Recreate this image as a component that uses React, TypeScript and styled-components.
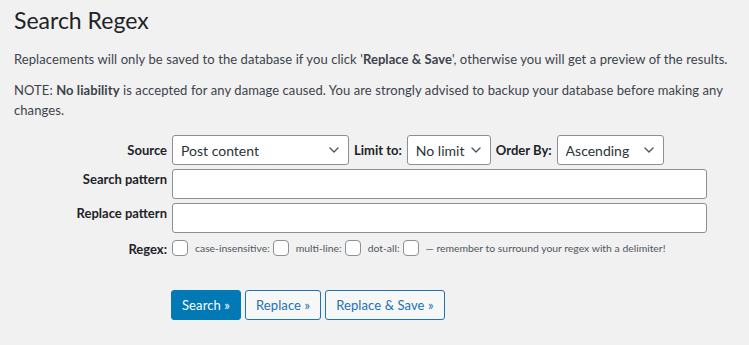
import React from "react";
import styled, { createGlobalStyle } from "styled-components";

const Global = createGlobalStyle`
  html, body { margin: 0; padding: 0; background: #f1f1f1; }
  body {
    font-family: Lato, "Open Sans", Arial, sans-serif;
    font-size: 13px;
    color: #3c434a;
  }
  * { box-sizing: border-box; }
`;

const Wrap = styled.div`
  padding: 5px 6px 0 14px;
  width: 749px;
  height: 345px;
`;

const Title = styled.h1`
  margin: 0;
  font-size: 23px;
  font-weight: 400;
  line-height: 30px;
  color: #1d2327;
`;

const Para = styled.p<{ $mt: number }>`
  margin: ${(p) => p.$mt}px 0 0 0;
  line-height: 20px;
  font-size: 13px;
  letter-spacing: 0.08px;
`;

const Form = styled.div`
  margin-top: 15px;
  display: grid;
  grid-template-columns: 153px 535px;
  column-gap: 5px;
  row-gap: 4px;
`;

const Label = styled.div<{ $align?: string }>`
  font-weight: 700;
  text-align: right;
  line-height: 18px;
  align-self: ${(p) => p.$align || "start"};
  padding-top: ${(p) => (p.$align ? 0 : 1)}px;
  color: #1d2327;
`;

const Inline = styled.div`
  display: flex;
  align-items: center;
  gap: 5px;
`;

const InlineLabel = styled.span`
  font-weight: 700;
  color: #1d2327;
`;

const SelectWrap = styled.div<{ $w: number }>`
  position: relative;
  width: ${(p) => p.$w}px;
  height: 30px;
`;

const Select = styled.select`
  appearance: none;
  -webkit-appearance: none;
  width: 100%;
  height: 30px;
  border: 1px solid #8c8f94;
  border-radius: 3px;
  background: #fff;
  padding: 0 24px 0 8px;
  font-family: inherit;
  font-size: 14px;
  color: #2c3338;
  outline: none;
`;

const Chevron = styled.svg`
  position: absolute;
  right: 10px;
  top: 12px;
  pointer-events: none;
`;

const TextInput = styled.input`
  width: 535px;
  height: 30px;
  border: 1px solid #8c8f94;
  border-radius: 3px;
  background: #fff;
  padding: 0 8px;
  font-family: inherit;
  font-size: 14px;
  outline: none;
`;

const RegexRow = styled.div`
  display: flex;
  align-items: center;
  margin-top: 3px;
  height: 16px;
`;

const Check = styled.span`
  display: inline-block;
  width: 16px;
  height: 16px;
  border: 1px solid #8c8f94;
  border-radius: 4px;
  background: #fff;
  flex: none;
`;

const Small = styled.span<{ $ml: number }>`
  font-size: 10.4px;
  color: #50575e;
  margin-left: ${(p) => p.$ml}px;
  margin-right: 3px;
  white-space: nowrap;
`;

const Buttons = styled.div`
  grid-column: 2;
  margin-top: 28px;
  margin-left: -1px;
  display: flex;
  gap: 4px;
`;

const Button = styled.button<{ $primary?: boolean }>`
  height: 30px;
  padding: 0 10px;
  border-radius: 3px;
  font-family: inherit;
  font-size: 13px;
  letter-spacing: 0.1px;
  cursor: pointer;
  border: 1px solid ${(p) => (p.$primary ? "#0079b4" : "#2271b1")};
  background: ${(p) => (p.$primary ? "#0079b4" : "#f6f7f7")};
  color: ${(p) => (p.$primary ? "#fff" : "#2271b1")};
`;

const Down = () => (
  <Chevron width="10" height="6" viewBox="0 0 10 6">
    <path d="M1 1 L5 5 L9 1" fill="none" stroke="#50575e" strokeWidth="1.4" strokeLinecap="round" strokeLinejoin="round" />
  </Chevron>
);

export default function App() {
  return (
    <Wrap>
      <Global />
      <Title>Search Regex</Title>
      <Para $mt={14}>
        Replacements will only be saved to the database if you click '<b>Replace &amp; Save</b>', otherwise you will get a preview of the results.
      </Para>
      <Para $mt={11}>
        NOTE: <b>No liability</b> is accepted for any damage caused. You are strongly advised to backup your database before making any changes.
      </Para>
      <Form>
        <Label $align="center">Source</Label>
        <Inline>
          <SelectWrap $w={177}>
            <Select defaultValue="post">
              <option value="post">Post content</option>
            </Select>
            <Down />
          </SelectWrap>
          <InlineLabel>Limit to:</InlineLabel>
          <SelectWrap $w={84}>
            <Select defaultValue="none">
              <option value="none">No limit</option>
            </Select>
            <Down />
          </SelectWrap>
          <InlineLabel>Order By:</InlineLabel>
          <SelectWrap $w={107}>
            <Select defaultValue="asc">
              <option value="asc">Ascending</option>
            </Select>
            <Down />
          </SelectWrap>
        </Inline>
        <Label>Search pattern</Label>
        <TextInput type="text" />
        <Label>Replace pattern</Label>
        <TextInput type="text" />
        <Label $align="center" style={{ marginTop: 3 }}>Regex:</Label>
        <RegexRow>
          <Check />
          <Small $ml={7}>case-insensitive:</Small>
          <Check />
          <Small $ml={7}>multi-line:</Small>
          <Check />
          <Small $ml={7}>dot-all:</Small>
          <Check />
          <Small $ml={7}>— remember to surround your regex with a delimiter!</Small>
        </RegexRow>
        <Buttons>
          <Button $primary>Search »</Button>
          <Button>Replace »</Button>
          <Button>Replace &amp; Save »</Button>
        </Buttons>
      </Form>
    </Wrap>
  );
}
